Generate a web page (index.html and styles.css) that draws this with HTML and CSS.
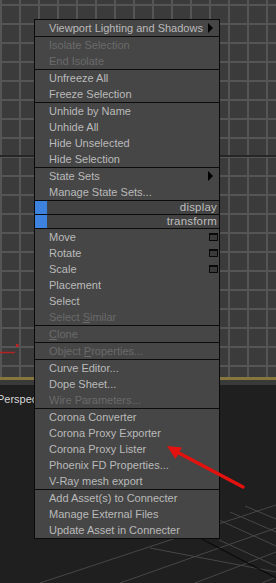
FILE: index.html
```html
<!DOCTYPE html>
<html>
<head>
<meta charset="utf-8">
<link rel="stylesheet" href="styles.css">
</head>
<body>
<div class="stage">
  <div class="vp-top">
    <svg class="axis-marks" width="30" height="20" viewBox="0 340 30 20">
      <line x1="0" y1="352.5" x2="15" y2="352.5" stroke="#b62222" stroke-width="1.5"/>
      <rect x="16" y="344" width="2.5" height="3" fill="#c02424"/>
    </svg>
  </div>
  <div class="vp-frame"></div>
  <div class="vp-band"></div>
  <div class="vp-bottom">
    <div class="vp-label">Perspective</div>
    <svg class="persp" width="276" height="198" viewBox="0 385 276 198">
      <g stroke="#474747" stroke-width="1" fill="none">
        <line x1="40" y1="583" x2="276" y2="505"/>
        <line x1="120" y1="583" x2="276" y2="528"/>
        <line x1="195" y1="583" x2="276" y2="552"/>
        <line x1="262" y1="583" x2="276" y2="577"/>
        <line x1="219" y1="520" x2="276" y2="546"/>
        <line x1="230" y1="512" x2="276" y2="532"/>
        <line x1="150" y1="548" x2="276" y2="572"/>
        <line x1="219" y1="540" x2="276" y2="566"/>
        <line x1="245" y1="506" x2="276" y2="519"/>
      </g>
      <line x1="200" y1="538" x2="276" y2="578" stroke="#0c0c0c" stroke-width="1.2"/>
    </svg>
  </div>

  <div class="menu">
    <div class="item"><span class="txt">Viewport Lighting and Shadows</span><span class="tri"></span></div>
    <div class="sep"></div>
    <div class="item off"><span class="txt">Isolate Selection</span></div>
    <div class="item off"><span class="txt">End Isolate</span></div>
    <div class="sep"></div>
    <div class="item"><span class="txt">Unfreeze All</span></div>
    <div class="item"><span class="txt">Freeze Selection</span></div>
    <div class="sep"></div>
    <div class="item"><span class="txt">Unhide by Name</span></div>
    <div class="item"><span class="txt">Unhide All</span></div>
    <div class="item"><span class="txt">Hide Unselected</span></div>
    <div class="item"><span class="txt">Hide Selection</span></div>
    <div class="sep"></div>
    <div class="item"><span class="txt">State Sets</span><span class="tri"></span></div>
    <div class="item"><span class="txt">Manage State Sets...</span></div>
    <div class="sep"></div>
    <div class="quad"><span class="swatch"></span><span class="qlabel">display</span></div>
    <div class="sep"></div>
    <div class="quad"><span class="swatch"></span><span class="qlabel">transform</span></div>
    <div class="sep"></div>
    <div class="item"><span class="txt">Move</span><span class="win"></span></div>
    <div class="item"><span class="txt">Rotate</span><span class="win"></span></div>
    <div class="item"><span class="txt">Scale</span><span class="win"></span></div>
    <div class="item"><span class="txt">Placement</span></div>
    <div class="item"><span class="txt">Select</span></div>
    <div class="item off"><span class="txt">Select <u>S</u>imilar</span></div>
    <div class="sep"></div>
    <div class="item off"><span class="txt"><u>C</u>lone</span></div>
    <div class="sep"></div>
    <div class="item off"><span class="txt">Object <u>P</u>roperties...</span></div>
    <div class="sep"></div>
    <div class="item"><span class="txt">Curve Editor...</span></div>
    <div class="item"><span class="txt">Dope Sheet...</span></div>
    <div class="item off"><span class="txt">Wire Parameters...</span></div>
    <div class="sep"></div>
    <div class="item"><span class="txt">Corona Converter</span></div>
    <div class="item"><span class="txt">Corona Proxy Exporter</span></div>
    <div class="item"><span class="txt">Corona Proxy Lister</span></div>
    <div class="item"><span class="txt">Phoenix FD Properties...</span></div>
    <div class="item"><span class="txt">V-Ray mesh export</span></div>
    <div class="sep"></div>
    <div class="item"><span class="txt">Add Asset(s) to Connecter</span></div>
    <div class="item"><span class="txt">Manage External Files</span></div>
    <div class="item"><span class="txt">Update Asset in Connecter</span></div>
  </div>

  <svg class="arrow" width="276" height="583" viewBox="0 0 276 583">
    <line x1="243" y1="487" x2="177" y2="452" stroke="#e3120f" stroke-width="3.5" stroke-linecap="round"/>
    <polygon points="167,446 182,447.5 175.5,459" fill="#e3120f"/>
  </svg>
</div>
</body>
</html>
```

FILE: styles.css
```css
html, body {
  margin: 0;
  padding: 0;
  background: #1f1f1f;
}

.stage {
  position: relative;
  width: 276px;
  height: 583px;
  overflow: hidden;
  font-family: "Liberation Sans", Arial, sans-serif;
}

.vp-top {
  position: relative;
  height: 377px;
  background-color: #3b3b3b;
  background-image:
    linear-gradient(#262626, #262626),
    repeating-linear-gradient(to bottom, transparent 0, transparent 4px, #555555 4px, #555555 6px, transparent 6px, transparent 19px),
    repeating-linear-gradient(to right, #555555 0, #555555 2px, transparent 2px, transparent 19px);
  background-size: 100% 2px, 100% 100%, 100% 100%;
  background-position: 0 155px, 0 0, 0 0;
  background-repeat: no-repeat, repeat, repeat;
}

.axis-marks {
  position: absolute;
  left: 0;
  top: 340px;
}

.vp-frame {
  height: 3px;
  background: #86773d;
}

.vp-band {
  height: 5px;
  background: #393939;
}

.vp-bottom {
  position: relative;
  height: 198px;
  background: #1f1f1f;
}

.vp-label {
  padding: 8px 0 0 0;
  margin-left: -3px;
  color: #d6d6d6;
  font-size: 11px;
  line-height: 12px;
}

.persp {
  position: absolute;
  left: 0;
  top: 0;
}

.menu {
  position: absolute;
  left: 34px;
  top: 19px;
  width: 184px;
  border: 1px solid #0a0a0a;
  background: #464646;
  display: flex;
  flex-direction: column;
  font-size: 11px;
  color: #bababa;
}

.item {
  height: 16px;
  line-height: 16px;
  padding-left: 14px;
  display: flex;
  align-items: center;
  white-space: nowrap;
}

.txt {
  white-space: pre;
}

.item.off {
  color: #6a6a6a;
}

.item u {
  text-decoration: underline;
  text-underline-offset: 1px;
}

.sep {
  height: 1px;
  background: #0c0c0c;
}

.tri {
  margin-left: auto;
  margin-right: 6px;
  width: 0;
  height: 0;
  border-left: 5px solid #000;
  border-top: 5px solid transparent;
  border-bottom: 5px solid transparent;
}

.win {
  margin-left: auto;
  margin-right: 1px;
  width: 7px;
  height: 5px;
  border: 1px solid #0a0a0a;
  border-top-width: 2px;
  background: #3a3a3a;
}

.quad {
  height: 13px;
  display: flex;
  align-items: center;
  background: #424242;
}

.swatch {
  width: 12px;
  height: 13px;
  background: #3e82df;
}

.qlabel {
  margin-left: auto;
  margin-right: 2px;
  color: #bdbdbd;
  font-size: 11.5px;
  letter-spacing: 0.2px;
  line-height: 13px;
}

.arrow {
  position: absolute;
  left: 0;
  top: 0;
  pointer-events: none;
}
```
